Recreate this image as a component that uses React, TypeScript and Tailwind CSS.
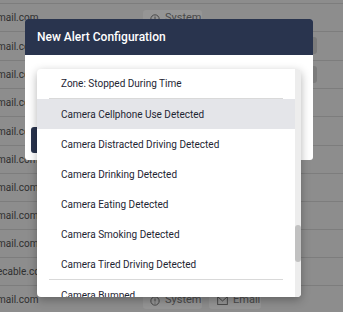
import React from "react";

const rows = [
  { text: "mail.com", h: "h-[28px]", chips: "system" },
  { text: "mail.com", h: "h-[29px]", chips: "dark" },
  { text: "mail.com", h: "h-[28px]", chips: "dark" },
  { text: "mail.com", h: "h-[28px]", chips: "" },
  { text: "mail.com", h: "h-[29px]", chips: "" },
  { text: "mail.com", h: "h-[28px]", chips: "" },
  { text: "mail.com", h: "h-[28px]", chips: "" },
  { text: "mail.com", h: "h-[28px]", chips: "" },
  { text: "mail.com", h: "h-[28px]", chips: "" },
  { text: "ecable.com", h: "h-[28px]", chips: "" },
  { text: "mail.com", h: "h-[28px]", chips: "both" },
];

const items = [
  "Camera Cellphone Use Detected",
  "Camera Distracted Driving Detected",
  "Camera Drinking Detected",
  "Camera Eating Detected",
  "Camera Smoking Detected",
  "Camera Tired Driving Detected",
];

function SystemChip() {
  return (
    <div className="absolute left-[143px] top-[6px] w-[59px] h-[17px] rounded-[3px] bg-[#959595] flex items-center gap-[5px] pl-[7px] text-[11px] text-[#4a4a4a]">
      <svg width="10" height="10" viewBox="0 0 12 12" fill="none" stroke="#4a4a4a" strokeWidth="1.2">
        <circle cx="6" cy="6" r="5" />
        <line x1="6" y1="3" x2="6" y2="6.5" />
        <line x1="6" y1="8" x2="6" y2="9" />
      </svg>
      <span>System</span>
    </div>
  );
}

function EmailChip() {
  return (
    <div className="absolute left-[209px] top-[6px] w-[52px] h-[17px] rounded-[3px] bg-[#959595] flex items-center gap-[5px] pl-[8px] text-[11px] text-[#4a4a4a]">
      <svg width="11" height="9" viewBox="0 0 12 10" fill="none" stroke="#4a4a4a" strokeWidth="1.1">
        <rect x="0.6" y="0.6" width="10.8" height="8.8" />
        <polyline points="0.8,1 6,5.5 11.2,1" />
      </svg>
      <span>Email</span>
    </div>
  );
}

export default function App() {
  return (
    <div
      className="relative w-[343px] h-[312px] overflow-hidden bg-[#8d8d8d]"
      style={{ fontFamily: "Roboto, 'Liberation Sans', sans-serif" }}
    >
      {/* background table under overlay */}
      <div className="flex flex-col -mt-[24px]">
        <div className="h-[28px] border-b border-[#7d7d7d]" />
        {rows.map((r, i) => (
          <div key={i} className={`relative ${r.h} border-b border-[#7d7d7d] flex items-center`}>
            <span className="-ml-[3px] text-[10px] text-[#2f2f2f]">{r.text}</span>
            {r.chips === "system" && <SystemChip />}
            {r.chips === "both" && (
              <>
                <SystemChip />
                <EmailChip />
              </>
            )}
            {r.chips === "dark" && (
              <div className="absolute left-[262px] top-[5px] w-[55px] h-[17px] rounded-[3px] bg-[#7b7b7b]" />
            )}
          </div>
        ))}
      </div>

      {/* modal */}
      <div className="absolute left-[25px] top-[19px] w-[288px] h-[141px] bg-white rounded-[3px] overflow-hidden flex flex-col">
        <div className="h-[36px] bg-[#29344e] flex items-center pl-[12px] text-white text-[12px] font-medium">
          New Alert Configuration
        </div>
        <div className="flex-1 pl-[6px] pt-[72px]">
          <div className="w-[90px] h-[26px] bg-[#29344e] rounded-[3px]" />
        </div>
      </div>

      {/* dropdown */}
      <div className="absolute left-[37px] top-[69px] w-[264px] h-[228px] bg-white rounded-[4px] overflow-hidden flex shadow-[0_3px_10px_rgba(0,0,0,0.3)]">
        <div className="flex-1 flex flex-col -mt-[1px] text-[10px] text-[#1e2533]">
          <div className="h-[30px] shrink-0 flex items-center pl-[24px]">Zone: Stopped During Time</div>
          <div className="h-px shrink-0 mx-3 bg-[#d9d9d9]" />
          {items.map((t, i) => (
            <div
              key={t}
              className={`h-[30px] shrink-0 flex items-center pl-[24px] ${i === 0 ? "bg-[#e4e5e9]" : ""}`}
            >
              {t}
            </div>
          ))}
          <div className="h-px shrink-0 mx-3 bg-[#d9d9d9]" />
          <div className="h-[30px] shrink-0 flex items-center pl-[24px]">Camera Bumped</div>
        </div>
        <div className="w-[6px] h-full bg-[#ededed] flex flex-col pt-[156px]">
          <div className="h-[37px] w-full rounded-[3px] bg-[#c1c1c1]" />
        </div>
      </div>
    </div>
  );
}
